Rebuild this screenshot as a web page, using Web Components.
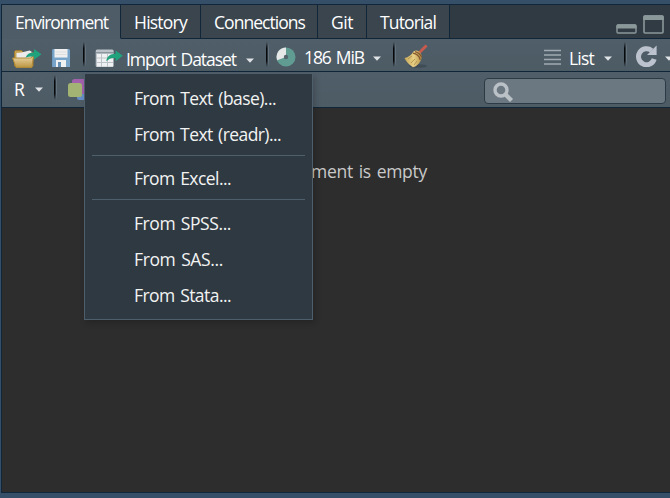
<!DOCTYPE html>
<html lang="en"><head><meta charset="utf-8"><title>Environment</title>
<style>
html,body{margin:0;width:670px;height:498px;overflow:hidden;background:#344f67;font-family:"Open Sans","Noto Sans",sans-serif;font-size:17.5px;color:#fff}
</style></head><body>
<env-pane></env-pane>
<script>
const define = (name, html, after) => customElements.define(name, class extends HTMLElement {
  constructor(){ super(); this.attachShadow({mode:'open'}).innerHTML = html; }
  connectedCallback(){ if (after) after(this); }
});
// Text label whose tracking is adjusted to a given advance width.
define('ui-label', `<style>:host{display:block;flex:none;white-space:nowrap;line-height:24px}span{display:inline-block;white-space:pre;word-spacing:1.5px}</style><span></span>`, el => {
  const s = el.shadowRoot.querySelector('span'), t = el.getAttribute('text'), w = +el.getAttribute('w');
  s.textContent = t;
  el.style.width = w + 'px';
  s.style.letterSpacing = (w - s.getBoundingClientRect().width) / t.length + 'px';
});
define('pane-tab', `<style>:host{display:flex;box-sizing:border-box;height:34px;align-items:flex-start;padding:5px 0 0 13px;background:#3a454e;border-right:1px solid #12263a;border-bottom:1px solid #12263a}
:host([active]){background:#4e5c67;border-bottom-color:#4e5c67}</style><slot></slot>`);
define('tool-sep', `<style>:host{display:block;flex:none;width:3px;height:25px;background:linear-gradient(90deg,#07090b 0 1px,#28323b 1px 2px,#65727c 2px);-webkit-mask:linear-gradient(transparent,#000 25%,#000 75%,transparent);mask:linear-gradient(transparent,#000 25%,#000 75%,transparent)}</style>`);
define('drop-arrow', `<style>:host{display:block;flex:none;width:8px;height:5px}svg{display:block}</style><svg width="8" height="5"><path d="M0 .5h8L4 4.7z" fill="#dfe3e5"/></svg>`);
define('menu-item', `<style>:host{display:flex;box-sizing:border-box;height:36px;align-items:center;padding:0 0 2px 49px;color:#f2f3f3}</style><slot></slot>`);
define('menu-rule', `<style>:host{display:block;height:1px;background:#4e5e6a;margin:2px 7px 5px}</style>`);
const icons = {
 open:[30,22,`<defs><linearGradient id="a" x2="0" y2="1"><stop stop-color="#f0deb0"/><stop offset="1" stop-color="#bd9643"/></linearGradient></defs><path d="M2.5 17V2.5l1-1h6l2 2h9.5V17z" fill="#c5a153" stroke="#a27c2e"/><path d="M4.5 15V4l5-.5 8-2 2 1V16z" fill="#ecebea"/><path d="M.6 9h18.6l2.3-3-1.5 12.4H4z" fill="url(#a)" stroke="#b28b38"/><path d="M13.5 8.5C15 5 18 3.3 22 3.2V.1L29.5 5.3 22 10.7V7.5c-3-.3-5.5 0-8.5 1z" fill="#20a27d"/>`],
 save:[18,18,`<path d="M0 1l1-1h16l1 1v17H0z" fill="#78a4ca"/><path d="M2.5 0h13v8.5h-13z" fill="#f0f0f0"/><path d="M3.5 3h11M3.5 5.5h11" stroke="#dedede"/><path d="M4 11h10v7H4z" fill="#eef0f2"/><path d="M6 13h3v5H6z" fill="#648fb4"/><path d="M0 18V1" stroke="#608eb4"/>`],
 sheet:[28,20,`<rect x=".7" y=".5" width="18" height="17.6" rx="1.5" fill="#bcc4c9"/><path d="M2 5h4v3.5H2zm5 0h5v3.5H7zm6 0h5v3.5h-5zM2 9.5h4V13H2zm5 0h5V13H7zm6 0h5V13h-5zM2 14h4v3.5H2zm5 0h5v3.5H7zm6 0h5v3.5h-5z" fill="#f0f1f3"/><path d="M1 3.7h18" stroke="#7f8b93"/><path d="M11.3 12.2C12 7.5 15 4.8 20.6 4.8V1.6L27.8 6.8l-7.2 5.4V9.1c-4-.7-6.4.5-9.3 3.1z" fill="#20a27d"/>`],
 memory:[20,20,`<circle cx="10" cy="10" r="9.5" fill="#619c93"/><path d="M10 10V.5A9.5 9.5 0 0 0 1.1 13.2z" fill="#e6e7e7"/><circle cx="10" cy="10" r="2.2" fill="#54636c"/>`],
 broom:[25,25,`<defs><linearGradient id="b"><stop stop-color="#c7aa5b"/><stop offset=".55" stop-color="#e7cf86"/><stop offset="1" stop-color="#b8934a"/></linearGradient></defs><ellipse cx="14" cy="22" rx="9" ry="1.8" fill="#34404a" opacity=".55"/><path d="M15.5 8.5L22.5 1.5" stroke="#c85b4c" stroke-width="2.8"/><path d="M9.5 7.5c3-1.8 4.5-1 6.7 1.3 1.6 2 1.8 3.7 1.2 6.2-1.4 4-4.4 7.4-8.4 8.2C5 21 2 17.5.5 14c4-.7 6.8-3 9-6.5z" fill="url(#b)"/><path d="M9 9.2c3.5.6 6.3 3.2 7.3 6.6M11 7.6c3.2.8 5.5 2.7 6.6 5.8" stroke="#84572d" stroke-width="1.3" fill="none"/><path d="M4 15l4-3m-1 7l4-4m-1 6l3-4" stroke="#a98a45" stroke-width=".8"/>`],
 list:[17,16,`<path d="M0 1.5h17M0 6h17M0 10.5h17M0 15h17" stroke="#a0abb1" stroke-width="1.4"/>`],
 refresh:[22,22,`<path d="M15.7 5.6A8 8 0 1 0 18.2 14" fill="none" stroke="#bcc3cf" stroke-width="5"/><path d="M20.6.4V10H11z" fill="#bcc3cf"/>`],
 windows:[49,20,`<rect x="1" y="10" width="19" height="8" rx="1" fill="#303b43" stroke="#8b989a" stroke-width="1.4"/><path d="M.5 13.5V11q0-1.7 1.7-1.7h16.6q1.7 0 1.7 1.7v2.5z" fill="#8b989a"/><rect x="28" y="1" width="19" height="17" rx="1" fill="#303b43" stroke="#8b989a" stroke-width="1.6"/><path d="M27.2 5V2Q27.2.2 29 .2h17Q47.8.2 47.8 2v3z" fill="#8b989a"/>`],
 env:[24,22,`<rect x="4" y="0" width="18" height="15" rx="2.5" fill="#a261ad"/><path d="M9 15h15v6H11q-2 0-2-2z" fill="#668dc5"/><rect x="0" y="4" width="14" height="14" rx="2.5" fill="#a3b374"/>`],
 search:[22,22,`<circle cx="8" cy="8" r="6" fill="none" stroke="#bac2c7" stroke-width="3.4"/><path d="M12.5 12.5l6 6" stroke="#bac2c7" stroke-width="4.3"/>`]
};
define('ui-icon', `<style>:host{display:block;flex:none}svg{display:block}</style><div></div>`, el => {
 const [w,h,p] = icons[el.getAttribute('name')];
 el.shadowRoot.querySelector('div').innerHTML = `<svg width="${w}" height="${h}" viewBox="0 0 ${w} ${h}">${p}</svg>`;
});
define('search-box', `<style>:host{display:flex;box-sizing:border-box;width:182px;height:26px;border:1px solid #2c3a46;border-radius:4px;background:#6c7881;padding:3px 0 0 8px}</style><ui-icon name="search"></ui-icon>`);
define('import-menu', `<style>:host{position:absolute;left:84px;top:73px;box-sizing:border-box;width:229px;height:247px;padding-top:7px;background:#2f3941;border:1px solid #4e5e6a;box-shadow:2px 3px 6px #0003}</style>
<menu-item><ui-label text="From Text (base)..." w="142"></ui-label></menu-item>
<menu-item><ui-label text="From Text (readr)..." w="147"></ui-label></menu-item><menu-rule></menu-rule>
<menu-item><ui-label text="From Excel..." w="97"></ui-label></menu-item><menu-rule style="margin-bottom:6px"></menu-rule>
<menu-item><ui-label text="From SPSS..." w="97"></ui-label></menu-item>
<menu-item><ui-label text="From SAS..." w="89"></ui-label></menu-item>
<menu-item><ui-label text="From Stata..." w="97"></ui-label></menu-item>`);
define('env-pane', `<style>
:host{display:grid;grid-template-rows:34px 33px 36px 1fr;box-sizing:border-box;height:498px;padding:5px 0 5px 2px;border:0;background:linear-gradient(#12263a,#12263a) 1px 4px/100% 489px no-repeat,#344f67}
.tabs{display:flex;background:#303a43;border-bottom:1px solid #12263a;height:33px}
.grow{flex:1}
.bar{display:flex;align-items:flex-start;background:linear-gradient(#505e69,#4d5b65);border-bottom:1px solid #12263a;white-space:nowrap}
.body{background:#2d2d2d;padding:51px 0 0 249px;color:#c9c9c9;margin-bottom:1px}
.bar>*{margin-left:var(--x,0);margin-top:var(--y,0)}
</style>
<div class="tabs">
<pane-tab active style="width:119px"><ui-label text="Environment" w="93"></ui-label></pane-tab>
<pane-tab style="width:80px"><ui-label text="History" w="53"></ui-label></pane-tab>
<pane-tab style="width:117px"><ui-label text="Connections" w="91"></ui-label></pane-tab>
<pane-tab style="width:49px"><ui-label text="Git" w="22"></ui-label></pane-tab>
<pane-tab style="width:83px"><ui-label text="Tutorial" w="56"></ui-label></pane-tab>
<span class="grow"></span><ui-icon name="windows" style="margin:10px 5px 0 0"></ui-icon></div>
<div class="bar">
<ui-icon name="open" style="--x:10px;--y:10px"></ui-icon>
<ui-icon name="save" style="--x:10px;--y:10px"></ui-icon>
<tool-sep style="--x:13px;--y:3px"></tool-sep>
<ui-icon name="sheet" style="--x:9px;--y:10px"></ui-icon>
<ui-label text="Import Dataset" w="110" style="--x:3px;--y:8px"></ui-label>
<drop-arrow style="--x:10px;--y:19px"></drop-arrow>
<tool-sep style="--x:12px;--y:3px"></tool-sep>
<ui-icon name="memory" style="--x:7px;--y:8px"></ui-icon>
<ui-label text="186 MiB" w="60" style="--x:8px;--y:6px"></ui-label>
<drop-arrow style="--x:9px;--y:17px"></drop-arrow>
<tool-sep style="--x:12px;--y:3px"></tool-sep>
<ui-icon name="broom" style="--x:8px;--y:5px"></ui-icon>
<span class="grow"></span>
<ui-icon name="list" style="--y:10px"></ui-icon>
<ui-label text="List" w="25" style="--x:8px;--y:7px"></ui-label>
<drop-arrow style="--x:10px;--y:17px"></drop-arrow>
<tool-sep style="--x:12px;--y:3px"></tool-sep>
<ui-icon name="refresh" style="--x:9px;--y:6px"></ui-icon>
<drop-arrow style="--x:7px;--y:17px;margin-right:-3px"></drop-arrow>
</div>
<div class="bar">
<ui-label text="R" w="11" style="--x:12px;--y:5px"></ui-label>
<drop-arrow style="--x:10px;--y:15px"></drop-arrow>
<tool-sep style="--x:11px;--y:3px"></tool-sep>
<ui-icon name="env" style="--x:11px;--y:7px"></ui-icon>
<span class="grow"></span>
<search-box style="--y:6px;margin-right:4px"></search-box>
</div>
<div class="body"><ui-label text="Environment is empty" w="176"></ui-label></div>
<import-menu></import-menu>`);
</script></body></html>
